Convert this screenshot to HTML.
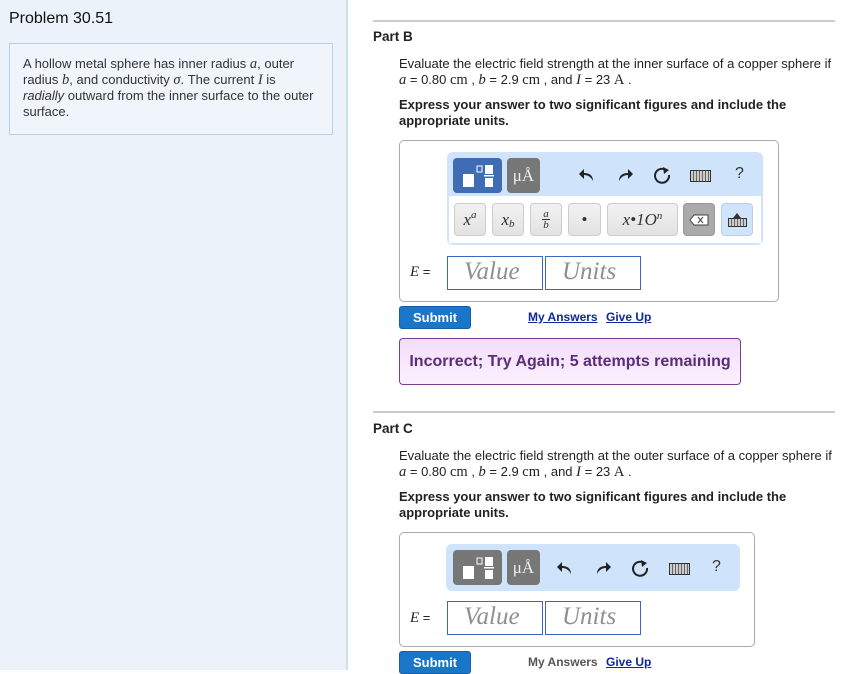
<!DOCTYPE html>
<html><head><meta charset="utf-8"><style>
*{margin:0;padding:0;box-sizing:border-box}
body{width:855px;height:670px;overflow:hidden;background:#fff;font-family:"Liberation Sans",Arial,sans-serif;color:#222;position:relative}
.a{position:absolute}
.m{font-family:"Liberation Serif","DejaVu Serif",serif;font-style:italic;font-size:14.5px}
.rm{font-family:"Liberation Serif","DejaVu Serif",serif;font-size:14.5px}
.t{font-size:13px;line-height:16px}
.btn{position:absolute;border-radius:4px;display:flex;align-items:center;justify-content:center}
.kb{background:linear-gradient(#f2f2f2,#e2e2e2);border:1px solid #ccc;font-family:"Liberation Serif",serif;font-style:italic;font-size:17px;color:#333}
.inp{position:absolute;border:1.5px solid #3a66c4;font-family:"Liberation Serif",serif;font-style:italic;font-size:25px;color:#8f8f8f;padding-left:16px;line-height:30px}
.hr{position:absolute;left:373px;width:462px;height:2px;background:#ccc}
.link{position:absolute;font-size:12px;font-weight:bold;color:#10289a;text-decoration:underline}
.sub{position:absolute;left:399px;width:72px;height:23px;background:#1a76c8;border:1px solid #1460a8;border-radius:3px;color:#fff;font-weight:bold;font-size:13px;text-align:center;line-height:21px}
</style></head><body>
<div class="a" style="left:0;top:0;width:346px;height:670px;background:#ebf2f9"></div>
<div class="a" style="left:346px;top:0;width:2px;height:670px;background:#cfdff0"></div>
<div class="a" style="left:9px;top:10px;font-size:16px;color:#111">Problem 30.51</div>
<div class="a t" style="left:9px;top:43px;width:324px;height:92px;border:1px solid #b9cfe3;background:#eff5fb;padding:12px 8px 0 13px;color:#333">A hollow metal sphere has inner radius <span class="m">a</span>, outer<br>radius <span class="m">b</span>, and conductivity <span class="m">σ</span>. The current <span class="m">I</span> is<br><i>radially</i> outward from the inner surface to the outer<br>surface.</div>

<div class="hr" style="top:20px"></div>
<div class="a" style="left:373px;top:29px;font-size:13.5px;font-weight:bold">Part B</div>
<div class="a t" style="left:399px;top:56px;width:438px">Evaluate the electric field strength at the inner surface of a copper sphere if <span class="m">a</span> = 0.80 <span class="rm">cm</span> , <span class="m">b</span> = 2.9 <span class="rm">cm</span> , and <span class="m">I</span> = 23 <span class="rm">A</span> .</div>
<div class="a t" style="left:399px;top:97px;width:420px;font-weight:bold">Express your answer to two significant figures and include the appropriate units.</div>

<div class="a" style="left:399px;top:140px;width:380px;height:162px;border:1px solid #aaa;border-radius:5px"></div>
<div class="a" style="left:447px;top:152px;width:316px;height:93px;background:#cfe3fb;border-radius:6px"></div>
<div class="a" style="left:449px;top:196px;width:312px;height:47px;background:#fff"></div>
<div class="btn" style="left:453px;top:158px;width:49px;height:35px;background:#3e6db4">
<svg width="34" height="26"><rect x="2" y="11" width="11" height="13" fill="#fff"/><rect x="16" y="3" width="5" height="6" fill="none" stroke="#fff" stroke-width="1"/><rect x="24" y="2" width="8" height="9" fill="#fff"/><rect x="23" y="12" width="10" height="1.5" fill="#fff"/><rect x="24" y="15" width="8" height="9" fill="#fff"/></svg></div>
<div class="btn" style="left:507px;top:158px;width:33px;height:35px;background:#777;color:#eee;font-family:'Liberation Serif',serif;font-size:17px">μÅ</div>
<div class="a" style="left:579px;top:166px"><svg width="18" height="18"><path d="M14 15 C14 9 10 7 5 7 L5 3 L0 8 L5 13 L5 9 C9 9 12 11 14 15Z" fill="#222"/></svg></div>
<div class="a" style="left:617px;top:166px"><svg width="18" height="18"><path d="M2 15 C2 9 6 7 11 7 L11 3 L16 8 L11 13 L11 9 C7 9 4 11 2 15Z" fill="#222"/></svg></div>
<div class="a" style="left:654px;top:166px"><svg width="18" height="18"><path d="M12 4 A7 7 0 1 0 15 9" fill="none" stroke="#222" stroke-width="2"/><path d="M9 1 L15 4 L10 8Z" fill="#222"/></svg></div>
<div class="a" style="left:690px;top:170px;width:21px;height:12px;border:1.5px solid #333;background:repeating-linear-gradient(90deg,#ccc 0 2px,#666 2px 3px)"></div>
<div class="a" style="left:735px;top:165px;font-size:16px;color:#333">?</div>
<div class="btn kb" style="left:454px;top:203px;width:32px;height:33px">x<span style="font-size:11px;margin-top:-9px">a</span></div>
<div class="btn kb" style="left:492px;top:203px;width:32px;height:33px">x<span style="font-size:11px;margin-top:9px">b</span></div>
<div class="btn kb" style="left:530px;top:203px;width:32px;height:33px;font-size:11px;flex-direction:column;line-height:10px">a<span style="display:block;width:8px;border-top:1px solid #333"></span>b</div>
<div class="btn kb" style="left:568px;top:203px;width:33px;height:33px;font-style:normal">•</div>
<div class="btn kb" style="left:607px;top:203px;width:71px;height:33px">x•1O<span style="font-size:11px;margin-top:-8px">n</span></div>
<div class="btn" style="left:683px;top:203px;width:32px;height:33px;background:#aaa;border:1px solid #999"><svg width="20" height="12"><path d="M5 1 H19 V11 H5 L1 6Z" fill="#fff" stroke="#444"/><path d="M9 3 L14 9 M14 3 L9 9" stroke="#444"/></svg></div>
<div class="btn" style="left:721px;top:203px;width:32px;height:33px;background:#cfe3fb;border:1px solid #b8cfea;flex-direction:column"><div style="width:0;height:0;border:4px solid transparent;border-bottom:5px solid #333;margin-top:-4px"></div><div style="width:19px;height:9px;border:1.5px solid #333;background:repeating-linear-gradient(90deg,#ccc 0 2px,#666 2px 3px)"></div></div>
<div class="a" style="left:410px;top:264px;font-size:13px"><span class="m" style="font-size:15px">E</span> =</div>
<div class="inp" style="left:447px;top:256px;width:96px;height:34px">Value</div>
<div class="inp" style="left:545px;top:256px;width:96px;height:34px">Units</div>
<div class="sub" style="top:306px">Submit</div>
<div class="link" style="left:528px;top:310px">My Answers</div>
<div class="link" style="left:606px;top:310px">Give Up</div>
<div class="a" style="left:399px;top:338px;width:342px;height:47px;border:1px solid #7a3e8e;border-radius:4px;background:linear-gradient(#f3ddfa,#fbf1fe);color:#5b2c79;font-weight:bold;font-size:16px;text-align:center;line-height:45px">Incorrect; Try Again; 5 attempts remaining</div>

<div class="hr" style="top:411px"></div>
<div class="a" style="left:373px;top:421px;font-size:13.5px;font-weight:bold">Part C</div>
<div class="a t" style="left:399px;top:448px;width:438px">Evaluate the electric field strength at the outer surface of a copper sphere if <span class="m">a</span> = 0.80 <span class="rm">cm</span> , <span class="m">b</span> = 2.9 <span class="rm">cm</span> , and <span class="m">I</span> = 23 <span class="rm">A</span> .</div>
<div class="a t" style="left:399px;top:489px;width:420px;font-weight:bold">Express your answer to two significant figures and include the appropriate units.</div>

<div class="a" style="left:399px;top:532px;width:356px;height:115px;border:1px solid #aaa;border-radius:5px"></div>
<div class="a" style="left:446px;top:544px;width:294px;height:47px;background:#cfe3fb;border-radius:6px"></div>
<div class="btn" style="left:453px;top:550px;width:49px;height:35px;background:#777">
<svg width="34" height="26"><rect x="2" y="11" width="11" height="13" fill="#fff"/><rect x="16" y="3" width="5" height="6" fill="none" stroke="#fff" stroke-width="1"/><rect x="24" y="2" width="8" height="9" fill="#fff"/><rect x="23" y="12" width="10" height="1.5" fill="#fff"/><rect x="24" y="15" width="8" height="9" fill="#fff"/></svg></div>
<div class="btn" style="left:507px;top:550px;width:33px;height:35px;background:#777;color:#eee;font-family:'Liberation Serif',serif;font-size:17px">μÅ</div>
<div class="a" style="left:557px;top:559px"><svg width="18" height="18"><path d="M14 15 C14 9 10 7 5 7 L5 3 L0 8 L5 13 L5 9 C9 9 12 11 14 15Z" fill="#222"/></svg></div>
<div class="a" style="left:595px;top:559px"><svg width="18" height="18"><path d="M2 15 C2 9 6 7 11 7 L11 3 L16 8 L11 13 L11 9 C7 9 4 11 2 15Z" fill="#222"/></svg></div>
<div class="a" style="left:632px;top:559px"><svg width="18" height="18"><path d="M12 4 A7 7 0 1 0 15 9" fill="none" stroke="#222" stroke-width="2"/><path d="M9 1 L15 4 L10 8Z" fill="#222"/></svg></div>
<div class="a" style="left:669px;top:563px;width:21px;height:12px;border:1.5px solid #333;background:repeating-linear-gradient(90deg,#ccc 0 2px,#666 2px 3px)"></div>
<div class="a" style="left:712px;top:558px;font-size:16px;color:#333">?</div>
<div class="a" style="left:410px;top:610px;font-size:13px"><span class="m" style="font-size:15px">E</span> =</div>
<div class="inp" style="left:447px;top:601px;width:96px;height:34px">Value</div>
<div class="inp" style="left:545px;top:601px;width:96px;height:34px">Units</div>
<div class="sub" style="top:651px">Submit</div>
<div class="a" style="left:528px;top:655px;font-size:12px;font-weight:bold;color:#555">My Answers</div>
<div class="link" style="left:606px;top:655px">Give Up</div>
</body></html>
